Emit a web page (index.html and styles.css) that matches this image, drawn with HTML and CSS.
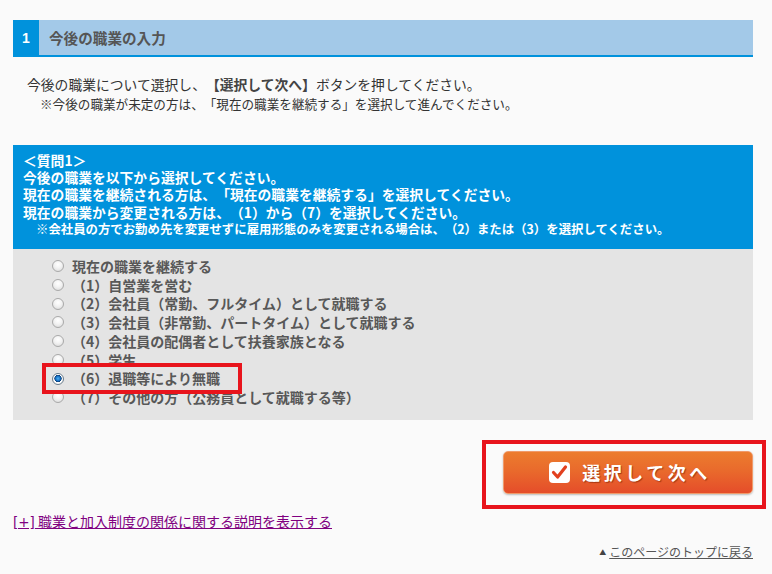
FILE: index.html
```html
<!DOCTYPE html>
<html lang="ja">
<head>
<meta charset="utf-8">
<title>今後の職業の入力</title>
<link rel="stylesheet" href="styles.css">
</head>
<body>
<div class="page">
  <div class="sec-head">
    <span class="sec-num">1</span>
    <h2 class="sec-title">今後の職業の入力</h2>
  </div>

  <div class="intro">
    <p class="intro-main">今後の職業について選択し、<b>【選択して次へ】</b>ボタンを押してください。</p>
    <p class="intro-note">※今後の職業が未定の方は、「現在の職業を継続する」を選択して進んでください。</p>
  </div>

  <div class="question">
    <div class="q-text">
      <p>＜質問1＞</p>
      <p>今後の職業を以下から選択してください。</p>
      <p>現在の職業を継続される方は、「現在の職業を継続する」を選択してください。</p>
      <p>現在の職業から変更される方は、（1）から（7）を選択してください。</p>
      <p class="q-note">※会社員の方でお勤め先を変更せずに雇用形態のみを変更される場合は、（2）または（3）を選択してください。</p>
    </div>
    <div class="choices">
      <label class="choice"><input type="radio" name="job" class="radio"><span>現在の職業を継続する</span></label>
      <label class="choice"><input type="radio" name="job" class="radio"><span>（1）自営業を営む</span></label>
      <label class="choice"><input type="radio" name="job" class="radio"><span>（2）会社員（常勤、フルタイム）として就職する</span></label>
      <label class="choice"><input type="radio" name="job" class="radio"><span>（3）会社員（非常勤、パートタイム）として就職する</span></label>
      <label class="choice"><input type="radio" name="job" class="radio"><span>（4）会社員の配偶者として扶養家族となる</span></label>
      <label class="choice"><input type="radio" name="job" class="radio"><span>（5）学生</span></label>
      <label class="choice choice-marked"><input type="radio" name="job" class="radio" checked><span>（6）退職等により無職</span><i class="mark mark-row"></i></label>
      <label class="choice"><input type="radio" name="job" class="radio"><span>（7）その他の方（公務員として就職する等）</span></label>
    </div>
  </div>

  <div class="actions">
    <div class="btn-wrap">
      <button type="button" class="btn-next">
        <svg class="btn-icon" width="21" height="21" viewBox="0 0 21 21" aria-hidden="true">
          <rect x="0" y="0" width="21" height="21" rx="4" fill="#ffffff"/>
          <path d="M4.5 10.5 L8.6 15 L16.5 5" fill="none" stroke="#e2401f" stroke-width="3.2" stroke-linecap="round" stroke-linejoin="round"/>
        </svg>
        <span>選択して次へ</span>
      </button>
      <i class="mark mark-btn"></i>
    </div>
  </div>

  <p class="more"><a href="#" class="more-link"><span class="bracket">[+]</span> 職業と加入制度の関係に関する説明を表示する</a></p>

  <p class="pagetop"><span class="tri">▲</span><a href="#" class="pagetop-link">このページのトップに戻る</a></p>
</div>
</body>
</html>
```

FILE: styles.css
```css
html, body {
  margin: 0;
  padding: 0;
  background: #fafafa;
}
body {
  font-family: "Noto Sans CJK JP", "Liberation Sans", sans-serif;
  color: #333;
  text-spacing-trim: space-all;
}
p { margin: 0; }

.page {
  width: 740px;
  padding: 20px 0 0 13px;
}

/* section heading */
.sec-head {
  display: flex;
  align-items: stretch;
  height: 35px;
  background: #a3c9e8;
  border-bottom: 2px solid #0092dc;
}
.sec-num {
  width: 26px;
  background: #0092dc;
  color: #fff;
  font-weight: bold;
  font-size: 14px;
  display: flex;
  align-items: center;
  justify-content: center;
  font-family: "Liberation Sans", sans-serif;
}
.sec-title {
  margin: 0 0 0 10px;
  font-size: 14.6px;
  font-weight: bold;
  color: #555;
  line-height: 35px;
}

/* intro */
.intro {
  padding: 17px 0 0 14px;
}
.intro-main {
  font-size: 13.8px;
  line-height: 20px;
}
.intro-main b { font-weight: bold; color: #444; }
.intro-note {
  font-size: 12.6px;
  line-height: 20px;
  padding-left: 13px;
}

/* question */
.question {
  margin-top: 31px;
}
.q-text {
  background: #0092dc;
  color: #fff;
  font-weight: bold;
  font-size: 13.8px;
  line-height: 17.2px;
  padding: 7px 10px 11px;
}
.q-note {
  font-size: 12.4px;
  padding-left: 13px;
}

.choices {
  background: #e4e4e4;
  padding: 8px 0 13px 39px;
  display: flex;
  flex-direction: column;
}
.choice {
  display: flex;
  align-items: center;
  gap: 8px;
  font-size: 14px;
  font-weight: bold;
  color: #585858;
  line-height: 18.7px;
  position: relative;
}
.choice-marked {
  background: #e4e4e4;
  margin: -2px 0 -2px -39px;
  padding: 2px 0 2px 39px;
  z-index: 1;
}

.radio {
  appearance: none;
  -webkit-appearance: none;
  margin: 0;
  width: 12px;
  height: 12px;
  border-radius: 50%;
  border: 1px solid #a9a9a9;
  background: radial-gradient(circle at 50% 35%, #ffffff 0%, #f2f2f2 45%, #d6d6d6 100%);
  box-sizing: border-box;
  flex: none;
}
.radio:checked {
  border-color: #6b7d8c;
  background: radial-gradient(circle at 50% 45%, #4fb0f0 0%, #1673c8 30%, #0d3f78 46%, #ffffff 52%, #eaeaea 100%);
}

/* red annotation frames */
.mark {
  position: absolute;
  border: 4px solid #e8141c;
  box-sizing: border-box;
  pointer-events: none;
}
.mark-row {
  left: 29px;
  top: -4px;
  width: 200px;
  height: 31px;
}

/* actions */
.actions {
  display: flex;
  justify-content: flex-end;
  margin-top: 31px;
}
.btn-wrap {
  position: relative;
}
.btn-next {
  width: 250px;
  height: 43px;
  border: 1px solid #f09a6a;
  border-radius: 5px;
  background: linear-gradient(to bottom, #ec7c2e 0%, #e96a2c 45%, #e54d2a 100%);
  box-shadow: 0 1px 2px rgba(0,0,0,0.25);
  display: flex;
  align-items: center;
  justify-content: center;
  gap: 12px;
  color: #fff;
  font-family: "Noto Sans CJK JP", sans-serif;
  font-size: 18px;
  font-weight: bold;
  letter-spacing: 3.5px;
  text-shadow: 1px 1px 1px rgba(120,30,0,0.6);
  padding: 0 0 0 4px;
  cursor: pointer;
}
.btn-icon { flex: none; }
.mark-btn {
  left: -21px;
  top: -11px;
  right: -13px;
  bottom: -15px;
}

.more {
  margin-top: 16px;
  font-size: 14px;
  line-height: 22px;
}
.more-link {
  color: #800080;
  text-decoration: underline;
}
.bracket {
  font-family: "DejaVu Sans", sans-serif;
  font-size: 13.5px;
}

.pagetop {
  margin-top: 9px;
  text-align: right;
  font-size: 12px;
  line-height: 20px;
  color: #555;
}
.tri {
  font-size: 7px;
  vertical-align: 2px;
  margin-right: 3px;
  color: #444;
}
.pagetop-link {
  color: #555;
  text-decoration: underline;
}
```
